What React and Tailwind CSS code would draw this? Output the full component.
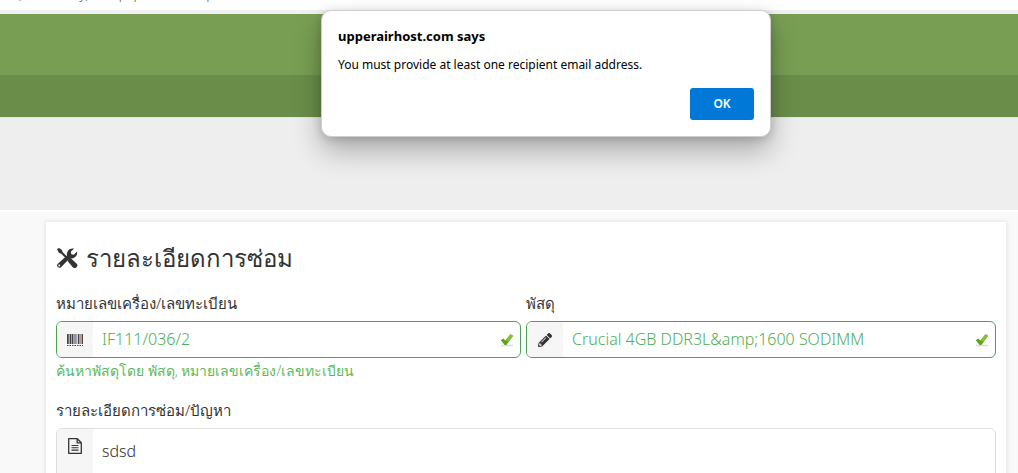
import { FaPencilAlt } from "react-icons/fa";

function ToolsIcon() {
  return (
    <svg viewBox="0 0 22 22" className="h-[22px] w-[22px] shrink-0 fill-[#333333]" aria-hidden="true">
      <path d="M1 2 3 1 6 3 6.500 5 11.500 10 10 11.500 5 6.500 3 6Z" />
      <path d="M12.500 12 14 10.500 20.500 16.500a2.600 2.600 0 0 1-3.700 3.700L11.500 14Z" />
      <path d="M1.600 17 11 8.500C10.200 4.500 13.500 .4 18.200 1.600L14.800 4.800 15.400 7.200 17.800 7.700 21 4.600C22 9 18 12.300 13.500 11.400L5 20.300A2.400 2.400 0 0 1 1.600 17ZM3.500 17.600a.9.9 0 1 0 .1 1.700.9.9 0 0 0-.1-1.700Z" fillRule="evenodd" />
    </svg>
  );
}

function BarcodeIcon() {
  return (
    <svg viewBox="0 0 18 14" className="h-[14px] w-[18px]" aria-hidden="true">
      <rect x="1" y="1" width="16" height="10" fill="#a3a6ad" />
      <g fill="#4a4142">
        <rect x="1" y="1" width="1.500" height="10" />
        <rect x="4" y="1" width="1" height="10" />
        <rect x="6" y="1" width="1" height="10" />
        <rect x="12" y="1" width="1" height="10" />
        <rect x="16" y="1" width="1" height="10" />
      </g>
      <rect x="8" y="1" width="2" height="10" fill="#8799ab" />
      <rect x="11" y="1" width="1" height="10" fill="#d8d5cd" />
      <rect x="13" y="1" width="2" height="10" fill="#b09c90" />
      <path d="M1 12.500H17" stroke="#444" strokeDasharray="1.500 1" />
    </svg>
  );
}

function FileIcon() {
  return (
    <svg viewBox="0 0 14 16" className="h-4 w-[14px] fill-none stroke-[#333333]" strokeWidth="1.300" aria-hidden="true">
      <path d="M.7 .7H9.300L13.300 4.700V15.300H.7Z" strokeLinejoin="round" />
      <path d="M9.200 .7V4.800H13.300" />
      <path d="M3.500 7.500H10.500M3.500 9.800H10.500M3.500 12.100H10.500" strokeWidth="1.100" />
    </svg>
  );
}

function ValidIcon() {
  return (
    <svg viewBox="0 0 14 14" className="h-[14px] w-[14px]" aria-hidden="true">
      <path d="M1 12.500H13" stroke="#d5dbea" strokeWidth="1.500" />
      <path d="M.8 7.200 3.300 5.600 5.400 7.600 10.500 1.200 13.200 2.800 6.400 12H4.600Z" fill="#5fa31a" />
      <path d="M5.400 7.600 10.500 1.200 13.200 2.800 8.500 8.600Z" fill="#86c033" />
    </svg>
  );
}

function Field({ id, label, value, icon, hint }) {
  return (
    <div className="flex min-w-0 flex-col">
      <label htmlFor={id} className="h-7 text-[15px] leading-5">
        {label}
      </label>
      <div className="flex h-[37px] overflow-hidden rounded-md border border-[#4f9f56]">
        <span className="flex w-9 shrink-0 items-center justify-center bg-[#f6f6f6]">{icon}</span>
        <input
          id={id}
          defaultValue={value}
          className="min-w-0 flex-1 bg-white px-[9px] pb-[2px] text-base text-[#4fae56] outline-none"
        />
        <span className="flex w-5 shrink-0 items-center">
          <ValidIcon />
        </span>
      </div>
      {hint && <p className="text-sm leading-[26px] text-[#5cb85c]">{hint}</p>}
    </div>
  );
}

function AlertDialog() {
  return (
    <div
      role="alertdialog"
      aria-labelledby="alert-title"
      aria-describedby="alert-text"
      className="absolute top-[10px] left-[321px] w-[450px] rounded-[10px] border border-[#cfcfcf] bg-white p-4 font-['Noto_Sans',sans-serif] font-normal text-black shadow-[0_14px_28px_rgba(0,0,0,0.28),0_2px_10px_rgba(0,0,0,0.16)]"
    >
      <h2 id="alert-title" className="text-[13px] leading-[18px] font-bold">
        upperairhost.com says
      </h2>
      <p id="alert-text" className="mt-[10px] text-xs leading-5">
        You must provide at least one recipient email address.
      </p>
      <div className="mt-[13px] flex justify-end">
        <button type="button" className="h-8 w-16 rounded-[3px] bg-[#0078d7] text-xs font-semibold text-white">
          OK
        </button>
      </div>
    </div>
  );
}

export default function App() {
  return (
    <div className="relative h-screen overflow-hidden bg-[#f9f9f9] font-['Noto_Sans',sans-serif] font-light text-[#333333]">
      <header>
        <div className="flex h-[10px] items-end overflow-hidden bg-white px-1 pb-[6px]">
          <p className="text-sm leading-5 whitespace-nowrap text-[#555555]">ild, electricity, &amp; equipment setup</p>
        </div>
        <div className="h-1 bg-[#f0f0f0]" />
        <div className="h-[61px] bg-[#789e53]" />
        <div className="h-[42px] bg-[#6a8e4a]" />
        <div className="h-[93px] border-t border-[#e2e8dc] bg-[#eeeeee]" />
        <div className="h-[2px] bg-white" />
      </header>

      <main className="mt-[9px] mr-[11px] ml-[45px] border border-[#eeeeee] bg-white px-[10px] pt-5 shadow-[0_0_4px_rgba(0,0,0,0.08)]">
        <h1 className="flex h-[51px] items-start gap-2 text-2xl leading-8">
          <span className="flex h-8 items-center">
            <ToolsIcon />
          </span>
          รายละเอียดการซ่อม
        </h1>
        <form>
          <div className="grid h-[107px] grid-cols-2">
            <div className="pr-[5px]">
              <Field
                id="serial"
                label="หมายเลขเครื่อง/เลขทะเบียน"
                value="IF111/036/2"
                icon={<BarcodeIcon />}
                hint="ค้นหาพัสดุโดย พัสดุ, หมายเลขเครื่อง/เลขทะเบียน"
              />
            </div>
            <Field
              id="item"
              label="พัสดุ"
              value="Crucial 4GB DDR3L&amp;amp;1600 SODIMM"
              icon={<FaPencilAlt size={14} />}
            />
          </div>
          <label htmlFor="problem" className="block h-7 text-[15px] leading-5">
            รายละเอียดการซ่อม/ปัญหา
          </label>
          <div className="flex overflow-hidden rounded-md border border-[#dddddd]">
            <span className="flex w-9 shrink-0 justify-center bg-[#f6f6f6] pt-[9px]">
              <FileIcon />
            </span>
            <textarea
              id="problem"
              rows={5}
              defaultValue="sdsd"
              className="flex-1 resize-none bg-white px-[9px] pt-[10px] text-base outline-none"
            />
          </div>
        </form>
      </main>

      <AlertDialog />
    </div>
  );
}
